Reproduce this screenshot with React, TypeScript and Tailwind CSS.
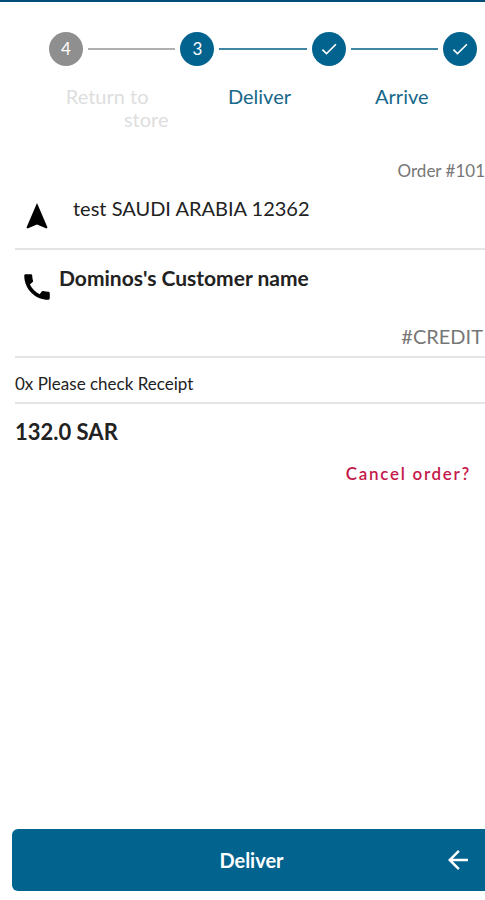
import { clsx } from "clsx";
import { MdArrowBack, MdCall, MdCheck } from "react-icons/md";

const steps = [
  { number: 4, state: "pending" },
  { number: 3, state: "current" },
  { number: 2, state: "done" },
  { number: 1, state: "done" },
];

const IconNavigate = () => {
  return (
    <svg viewBox="0 0 28 28" className="mt-2 size-7 text-black" aria-hidden="true">
      <path
        d="M14 1 L24.5 25.6 L23.4 26.6 L14 22.6 L4.6 26.6 L3.5 25.6 Z"
        fill="currentColor"
      />
    </svg>
  );
};

const Stepper = () => {
  return (
    <div className="pt-[30px]">
      <ol className="flex items-center gap-[5px] pl-[49px] pr-2">
        {steps.map((step, index) => (
          <li
            key={step.number}
            className={clsx(
              "flex items-center gap-[5px]",
              index < steps.length - 1 && "flex-1"
            )}
          >
            <span
              className={clsx(
                "flex size-[34px] shrink-0 items-center justify-center rounded-full text-[17px] text-white",
                step.state === "pending" ? "bg-[#8f8f8f]" : "bg-[#02638f]"
              )}
            >
              {step.state === "done" ? (
                <MdCheck className="size-5" />
              ) : (
                step.number
              )}
            </span>
            {index < steps.length - 1 && (
              <span
                className={clsx(
                  "h-[2px] flex-1",
                  step.state === "pending" ? "bg-[#b0b0b0]" : "bg-[#4186a3]"
                )}
              ></span>
            )}
          </li>
        ))}
      </ol>
      <div className="grid grid-cols-3 pl-[46px] pr-3 pt-[19px] text-center text-xl leading-[23px] text-[#17688a]">
        <p className="mx-auto flex flex-col items-end text-[#dedede]">
          <span className="pr-5">Return to</span>
          <span>store</span>
        </p>
        <p>Deliver</p>
        <p>Arrive</p>
      </div>
    </div>
  );
};

const App = () => {
  return (
    <div className="flex min-h-screen flex-col overflow-x-hidden border-t-2 border-[#004d78] bg-white font-['Lato',sans-serif] text-[#222]">
      <Stepper />

      <main className="pl-[15px]">
        <p className="pt-7 text-right text-[17px] leading-6 text-[#777]">
          Order #101
        </p>

        <section className="flex h-[67px] border-b-2 border-[#e4e4e4] pl-2 pt-[11px]">
          <IconNavigate />
          <p className="pl-[22px] text-xl leading-7">
            test SAUDI ARABIA 12362
          </p>
        </section>

        <section className="border-b-2 border-[#e4e4e4]">
          <div className="flex pl-[5px] pt-[14px]">
            <MdCall className="mt-[6px] size-[34px] text-black" />
            <h1 className="pl-[5px] text-[21px] font-bold leading-7">
              Dominos's Customer name
            </h1>
          </div>
          <p className="pb-[6px] pr-[2px] pt-[18px] text-right text-xl leading-7 text-[#777]">
            #CREDIT
          </p>
        </section>

        <p className="border-b-2 border-[#e4e4e4] pb-[6px] pt-[14px] text-[17px] leading-6">
          0x Please check Receipt
        </p>

        <p className="pt-[14px] text-[22px] font-bold leading-7">132.0 SAR</p>

        <div className="flex justify-end pr-[14px] pt-4">
          <button
            type="button"
            className="text-[17px] font-semibold leading-6 tracking-widest text-[#c5184a]"
          >
            Cancel order?
          </button>
        </div>
      </main>

      <footer className="mt-auto pb-[9px] pl-3">
        <button
          type="button"
          className="flex h-[62px] w-full items-center rounded-l-md bg-[#02638f] pl-12 pr-3 text-xl font-bold text-white"
        >
          <span className="flex-1">Deliver</span>
          <MdArrowBack className="size-[30px]" />
        </button>
      </footer>
    </div>
  );
};

export default App;
